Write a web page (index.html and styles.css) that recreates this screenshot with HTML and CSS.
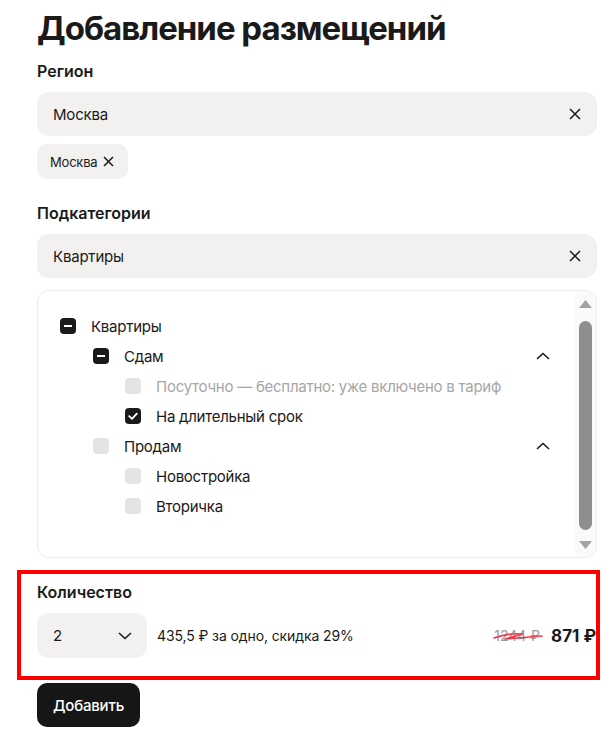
FILE: index.html
```html
<!DOCTYPE html>
<html lang="ru">
<head>
  <meta charset="UTF-8">
  <meta name="viewport" content="width=device-width, initial-scale=1.0">
  <title>Добавление размещений</title>
  <link rel="stylesheet" href="styles.css">
</head>
<body>
  <div class="page">
    <h1 class="title">Добавление размещений</h1>

    <!-- Регион -->
    <div class="field">
      <div class="label">Регион</div>
      <div class="input">
        <span>Москва</span>
        <svg class="clear" width="12" height="12" viewBox="0 0 12 12"><path d="M1 1L11 11M11 1L1 11" stroke="#1a1a1a" stroke-width="1.5" fill="none"/></svg>
      </div>
      <div class="chips">
        <div class="chip">
          <span>Москва</span>
          <svg width="11" height="11" viewBox="0 0 11 11"><path d="M1 1L10 10M10 1L1 10" stroke="#1a1a1a" stroke-width="1.5" fill="none"/></svg>
        </div>
      </div>
    </div>

    <!-- Подкатегории -->
    <div class="field field-sub">
      <div class="label">Подкатегории</div>
      <div class="input">
        <span>Квартиры</span>
        <svg class="clear" width="12" height="12" viewBox="0 0 12 12"><path d="M1 1L11 11M11 1L1 11" stroke="#1a1a1a" stroke-width="1.5" fill="none"/></svg>
      </div>

      <div class="tree-box">
        <div class="tree">
          <div class="row lvl-1">
            <span class="box box-on"><svg width="16" height="16" viewBox="0 0 16 16"><path d="M4 8H12" stroke="#fff" stroke-width="2"/></svg></span>
            <span class="text">Квартиры</span>
          </div>
          <div class="row lvl-2">
            <span class="box box-on"><svg width="16" height="16" viewBox="0 0 16 16"><path d="M4 8H12" stroke="#fff" stroke-width="2"/></svg></span>
            <span class="text">Сдам</span>
            <svg class="chevron" width="14" height="8" viewBox="0 0 14 8"><path d="M1 7L7 1.5L13 7" stroke="#1a1a1a" stroke-width="1.6" fill="none"/></svg>
          </div>
          <div class="row lvl-3 row-disabled">
            <span class="box"></span>
            <span class="text">Посуточно — бесплатно: уже включено в тариф</span>
          </div>
          <div class="row lvl-3">
            <span class="box box-on"><svg width="16" height="16" viewBox="0 0 16 16"><path d="M4.2 8.2L7 10.8L11.8 5.6" stroke="#fff" stroke-width="1.8" fill="none" stroke-linecap="round" stroke-linejoin="round"/></svg></span>
            <span class="text">На длительный срок</span>
          </div>
          <div class="row lvl-2">
            <span class="box"></span>
            <span class="text">Продам</span>
            <svg class="chevron" width="14" height="8" viewBox="0 0 14 8"><path d="M1 7L7 1.5L13 7" stroke="#1a1a1a" stroke-width="1.6" fill="none"/></svg>
          </div>
          <div class="row lvl-3">
            <span class="box"></span>
            <span class="text">Новостройка</span>
          </div>
          <div class="row lvl-3">
            <span class="box"></span>
            <span class="text">Вторичка</span>
          </div>
        </div>
        <div class="scrollbar">
          <svg width="15" height="10" viewBox="0 0 15 10"><path d="M7.5 1L14 9H1Z" fill="#a3a3a3"/></svg>
          <div class="thumb"></div>
          <svg width="15" height="10" viewBox="0 0 15 10"><path d="M1 1H14L7.5 9Z" fill="#a3a3a3"/></svg>
        </div>
      </div>
    </div>

    <!-- Количество -->
    <div class="quantity">
      <div class="label">Количество</div>
      <div class="qty-row">
        <div class="select">
          <span>2</span>
          <svg width="14" height="8" viewBox="0 0 14 8"><path d="M1 1L7 6.5L13 1" stroke="#1a1a1a" stroke-width="1.6" fill="none"/></svg>
        </div>
        <div class="per-one">435,5 ₽ за одно, скидка 29%</div>
        <div class="prices">
          <span class="old-price">1244 ₽
            <svg class="scribble" width="50" height="14" viewBox="0 0 50 14"><path d="M1 9C9 6 19 4 30 5L12 10C24 9 38 8 49 7" stroke="#f23a4c" stroke-width="1.6" fill="none" stroke-linecap="round" stroke-linejoin="round"/></svg>
          </span>
          <span class="new-price">871 ₽</span>
        </div>
      </div>
    </div>

    <button class="btn">Добавить</button>
  </div>
</body>
</html>
```

FILE: styles.css
```css
body {
  margin: 0;
  font-family: Inter, "Noto Sans", Arial, sans-serif;
  color: #1a1a1a;
  background: #fff;
}

.page {
  width: 560px;
  padding: 8px 0 0 37px;
}

.title {
  margin: 0;
  font-size: 33px;
  line-height: 40px;
  font-weight: 700;
  letter-spacing: -1px;
}

.label {
  font-size: 16px;
  line-height: 20px;
  font-weight: 600;
  margin-bottom: 11px;
}

.field {
  margin-top: 13px;
}

.field-sub {
  margin-top: 24px;
}

.input {
  height: 44px;
  background: #f2f1ef;
  border-radius: 12px;
  display: flex;
  align-items: center;
  justify-content: space-between;
  padding: 0 16px 0 16px;
  font-size: 15px;
  letter-spacing: -0.2px;
}

.chips {
  display: flex;
  margin-top: 8px;
}

.chip {
  height: 35px;
  background: #f2f1ef;
  border-radius: 10px;
  display: flex;
  align-items: center;
  gap: 6px;
  padding: 0 14px 0 13px;
  font-size: 13px;
  letter-spacing: -0.2px;
}

.tree-box {
  margin-top: 12px;
  height: 266px;
  border: 1px solid #ededed;
  border-radius: 12px;
  display: flex;
  overflow: hidden;
}

.tree {
  flex: 1;
  padding: 20px 25px 0 22px;
}

.row {
  height: 30px;
  display: flex;
  align-items: center;
  gap: 15px;
  font-size: 15px;
  letter-spacing: -0.25px;
}

.lvl-2 {
  padding-left: 33px;
}

.lvl-3 {
  padding-left: 65px;
}

.row-disabled .text {
  color: #a6a6a6;
}

.box {
  width: 16px;
  height: 16px;
  border-radius: 4px;
  background: #e5e4e2;
  flex-shrink: 0;
  display: flex;
}

.box-on {
  background: #1a1a1a;
}

.chevron {
  margin-left: auto;
}

.scrollbar {
  width: 21px;
  background: #fafafa;
  display: flex;
  flex-direction: column;
  align-items: center;
  padding: 8px 0 7px;
  gap: 2px;
}

.thumb {
  flex: 1;
  width: 13px;
  margin: 10px 0 8px;
  background: #8e8e8e;
  border-radius: 7px;
}

.quantity {
  margin: 12px 0 0 -20px;
  width: 559px;
  border: 4px solid #ff0000;
  padding: 8px 0 18px 16px;
}

.quantity .label {
  margin-bottom: 11px;
}

.qty-row {
  display: flex;
  align-items: center;
}

.select {
  width: 110px;
  height: 45px;
  box-sizing: border-box;
  background: #f2f1ef;
  border-radius: 12px;
  display: flex;
  align-items: center;
  justify-content: space-between;
  padding: 0 15px 0 16px;
  font-size: 15px;
}

.per-one {
  margin-left: 10px;
  font-size: 14px;
  letter-spacing: -0.1px;
}

.prices {
  margin-left: auto;
  display: flex;
  align-items: center;
  gap: 11px;
}

.old-price {
  position: relative;
  color: #9a9a9a;
  font-size: 14px;
}

.scribble {
  position: absolute;
  left: -1px;
  top: 2px;
}

.new-price {
  font-size: 17px;
  font-weight: 700;
}

.btn {
  margin-top: 3px;
  height: 44px;
  padding: 0 16px;
  background: #161616;
  color: #fff;
  border: none;
  border-radius: 10px;
  font-family: inherit;
  font-size: 15px;
  font-weight: 500;
  letter-spacing: -0.2px;
}
```
